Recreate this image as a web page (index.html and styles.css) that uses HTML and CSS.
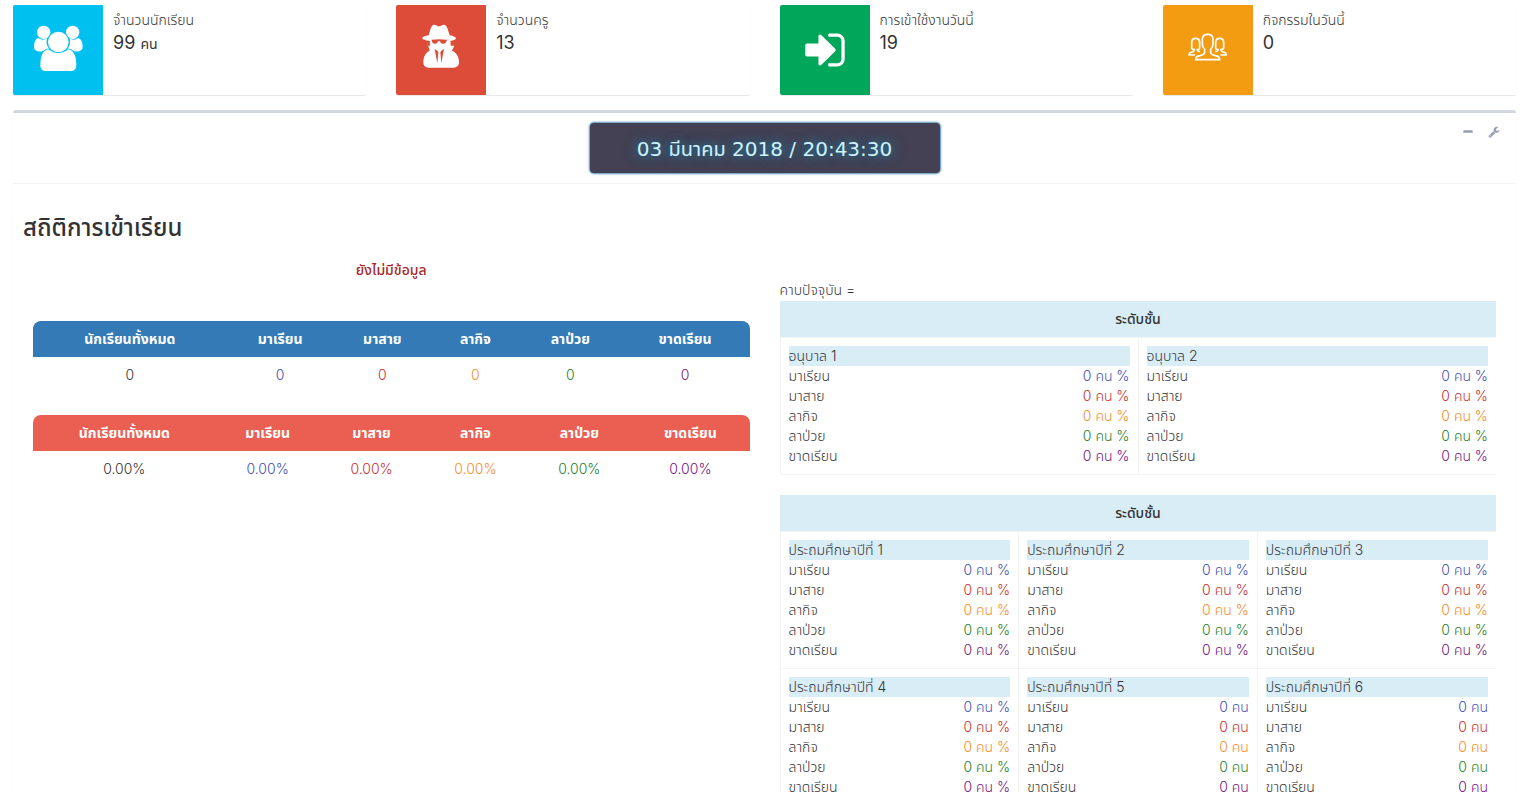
FILE: index.html
```html
<!DOCTYPE html>
<html lang="th">
<head>
<meta charset="utf-8">
<title>สถิติการเข้าเรียน</title>
<link rel="stylesheet" href="styles.css">
</head>
<body>
<main class="page">
  <section class="cards">
    <article class="card">
      <div class="card-icon aqua">
        <svg class="icon" viewBox="0 0 180 180" aria-hidden="true"><circle cx="47" cy="37" r="20"/><circle cx="134" cy="37" r="20"/><path d="M31 54Q44 64 57 55Q52 76 66 88Q50 88 44 94Q18 97 18 80Q18 58 31 54zM150 54Q138 64 125 55Q130 76 116 88Q131 88 138 94Q164 97 164 80Q164 58 150 54z"/><circle class="gap" cx="91" cy="66" r="31"/><path class="gap" d="M61 88Q74 99 91 99T121 88Q145 92 145 137Q144 153 128 153H54Q38 153 37 137Q37 92 61 88z"/></svg>
      </div>
      <div class="card-text"><span class="card-label">จำนวนนักเรียน</span><strong class="card-number">99 <small>คน</small></strong></div>
    </article>
    <article class="card">
      <div class="card-icon red">
        <svg class="icon" viewBox="0 0 180 180" aria-hidden="true"><path fill-rule="evenodd" d="M57 47C61 33 65 16 72 15C79 14 82 20 88 20S98 14 104 15C112 17 116 33 120 47C132 49 139 53 139 56C139 60 130 63 122 64C123 70 123 75 123 78H134L127 93C142 99 148 113 148 128C148 139 141 144 132 144H57C47 144 41 139 41 128C41 113 47 99 60 93L51 63L55 78H62Q59 70 61 64C48 62 38 60 38 56C38 52 45 49 57 47zM66 60V63C69 75 81 75 84 66Q85 64 88 64T92 66C95 75 108 75 111 63V60Q88 57 66 60zM75 88C79 90 83 92 86 98L83 131zM103 88C99 90 95 92 92 98L95 131z" transform="translate(-4 -1)"/></svg>
      </div>
      <div class="card-text"><span class="card-label">จำนวนครู</span><strong class="card-number">13</strong></div>
    </article>
    <article class="card">
      <div class="card-icon green">
        <svg class="icon-sign" viewBox="0 0 1792 1792" aria-hidden="true"><path d="M1312 896q0 26-19 45l-544 544q-19 19-45 19t-45-19-19-45v-288h-448q-26 0-45-19t-19-45v-384q0-26 19-45t45-19h448v-288q0-26 19-45t45-19 45 19l544 544q19 19 19 45zm352-352v704q0 119-84.5 203.5t-203.5 84.5h-320q-13 0-22.500-9.500t-9.500-22.500q0-4-1-20t-.5-26.500 3-23.500 10-19.500 20.500-6.500h320q66 0 113-47t47-113v-704q0-66-47-113t-113-47h-312l-11.500-1-11.500-3-8-5.500-7-9-2-13.500q0-4-1-20t-.5-26.500 3-23.500 10-19.500 20.500-6.500h320q119 0 203.500 84.500t84.500 203.500z"/></svg>
      </div>
      <div class="card-text"><span class="card-label">การเข้าใช้งานวันนี้</span><strong class="card-number">19</strong></div>
    </article>
    <article class="card">
      <div class="card-icon orange">
        <svg class="icon line" viewBox="0 0 180 180" aria-hidden="true"><path d="M53 119Q53 109 66 107Q80 104 80 97V88Q73 82 73 71V58Q73 43 89 43T105 58V71Q105 82 98 88V97Q98 104 112 107Q125 109 125 119zM51 105H33Q33 98 42 96Q49 94 49 89Q40 89 41 80V68Q41 55 53 55T65 68V80Q66 89 58 89Q58 93 66 95M127 105H145Q145 98 136 96Q129 94 129 89Q138 89 137 80V68Q137 55 125 55T113 68V80Q112 89 120 89Q120 93 112 95"/></svg>
      </div>
      <div class="card-text"><span class="card-label">กิจกรรมในวันนี้</span><strong class="card-number">0</strong></div>
    </article>
  </section>

  <section class="box">
    <header class="box-header">
      <time class="clock" datetime="2018-03-03T20:43:30">03 มีนาคม 2018 / 20:43:30</time>
      <div class="tools">
        <button type="button" aria-label="ย่อ"><svg viewBox="0 0 1792 1792"><path d="M1600 736v192q0 40-28 68t-68 28h-1216q-40 0-68-28t-28-68v-192q0-40 28-68t68-28h1216q40 0 68 28t28 68z"/></svg></button>
        <button type="button" aria-label="ตั้งค่า"><svg viewBox="0 0 1792 1792"><path d="M448 1472q0-26-19-45t-45-19-45 19-19 45 19 45 45 19 45-19 19-45zm644-420l-682 682q-37 37-90 37-52 0-91-37l-106-108q-38-36-38-90 0-53 38-91l681-681q39 98 114.500 173.500t173.500 114.500zm634-435q0 39-23 106-47 134-164.500 217.500t-258.500 83.500q-185 0-316.500-131.500t-131.500-316.500 131.500-316.500 316.500-131.500q58 0 121.500 16.500t107.500 46.500q16 11 16 28t-16 28l-293 169v224l193 107q5-3 79-48.500t135.500-81 70.500-35.500q15 0 23.500 10t8.500 25z"/></svg></button>
      </div>
    </header>
    <div class="box-body">
      <h1 class="title">สถิติการเข้าเรียน</h1>
      <div class="columns">
        <div class="summary">
          <p class="notice">ยังไม่มีข้อมูล</p>
          <table class="totals counts">
            <thead><tr><th>นักเรียนทั้งหมด</th><th>มาเรียน</th><th>มาสาย</th><th>ลากิจ</th><th>ลาป่วย</th><th>ขาดเรียน</th></tr></thead>
            <tbody><tr><td>0</td><td class="present">0</td><td class="late">0</td><td class="leave">0</td><td class="sick">0</td><td class="absent">0</td></tr></tbody>
          </table>
          <table class="totals percents">
            <thead><tr><th>นักเรียนทั้งหมด</th><th>มาเรียน</th><th>มาสาย</th><th>ลากิจ</th><th>ลาป่วย</th><th>ขาดเรียน</th></tr></thead>
            <tbody><tr><td>0.00%</td><td class="present">0.00%</td><td class="late">0.00%</td><td class="leave">0.00%</td><td class="sick">0.00%</td><td class="absent">0.00%</td></tr></tbody>
          </table>
        </div>
        <div class="levels">
          <p class="period">คาบปัจจุบัน =</p>
          <table class="level" data-columns="2" data-rooms="อนุบาล 1|อนุบาล 2" data-units="0 คน %|0 คน %"></table>
          <table class="level" data-columns="3" data-rooms="ประถมศึกษาปีที่ 1|ประถมศึกษาปีที่ 2|ประถมศึกษาปีที่ 3|ประถมศึกษาปีที่ 4|ประถมศึกษาปีที่ 5|ประถมศึกษาปีที่ 6" data-units="0 คน %|0 คน %|0 คน %|0 คน %|0 คน|0 คน"></table>
        </div>
      </div>
    </div>
  </section>
</main>
<script src="script.js"></script>
</body>
</html>
```
FILE: styles.css
```css
* { box-sizing: border-box; }
body {
  margin: 0;
  background: #fff;
  color: #333;
  font: 300 14px/20px Inter, "Noto Sans Thai", "Noto Sans", sans-serif;
}
.page {
  height: 100vh;
  overflow: hidden;
  padding: 5px 7px 0 13px;
}
.cards {
  display: grid;
  grid-template-columns: repeat(4, 1fr);
  gap: 30px;
  margin-bottom: 15px;
}
.card {
  display: flex;
  height: 90px;
  border-radius: 2px;
  box-shadow: 0 1px 1px rgba(0, 0, 0, 0.1);
}
.card-icon {
  display: flex;
  align-items: center;
  justify-content: center;
  width: 90px;
  border-radius: 2px 0 0 2px;
  fill: #fff;
}
.aqua { background: #00c0ef; }
.red { background: #dd4b39; }
.green { background: #00a65a; }
.orange { background: #f39c12; }
.icon { width: 60px; height: 60px; }
.icon-sign { width: 46px; height: 46px; }
.gap { stroke: #00c0ef; stroke-width: 5; paint-order: stroke; }
.line { fill: none; stroke: #fff; stroke-width: 5; }
.card-text { padding: 5px 10px; }
.card-label { display: block; line-height: 20px; }
.card-number { display: block; font-size: 18px; font-weight: 400; line-height: 25px; }
.card-number small { font-size: 14px; }

.box {
  border-top: 3px solid #d2d6de;
  border-radius: 3px;
  box-shadow: 0 1px 1px rgba(0, 0, 0, 0.1);
}
.box-header {
  display: grid;
  grid-template-columns: 1fr auto 1fr;
  align-items: start;
  padding: 10px;
  border-bottom: 1px solid #f4f4f4;
}
.clock {
  grid-column: 2;
  width: 350px;
  height: 50px;
  border-radius: 4px;
  background: #434153;
  box-shadow: 0 0 2px 1px #4a90b8;
  color: #cff3ff;
  font: 20px/52px "DejaVu Sans", "Noto Sans Thai", sans-serif;
  text-align: center;
  text-shadow: 0 0 10px rgba(10, 175, 230, 0.7), 0 0 20px rgba(10, 175, 230, 0.3);
}
.tools { display: flex; justify-content: flex-end; gap: 14px; padding: 3px 6px; }
.tools button { display: flex; padding: 0; border: 0; background: none; }
.tools svg { width: 12px; height: 12px; fill: #97a0b3; }

.box-body { padding: 10px; }
.title { margin: 21px 0 10px; font-size: 24px; font-weight: 500; line-height: 26px; }
.columns { display: grid; grid-template-columns: 1fr 1fr; gap: 30px; padding: 9px 10px 0; }
.notice { margin: 0 0 41px; color: #a22b28; font-weight: 500; text-align: center; }
.totals {
  width: 100%;
  margin-bottom: 22px;
  border-collapse: separate;
  border-spacing: 0;
  table-layout: fixed;
  text-align: center;
}
.totals th, .totals td { padding: 8px 0; }
.totals th { color: #fff; font-weight: 700; }
.totals th:first-child { border-top-left-radius: 8px; }
.totals th:last-child { border-top-right-radius: 8px; }
.counts th { background: #337ab7; width: 13.5%; }
.counts th:nth-child(1) { width: 27%; }
.counts th:nth-child(2) { width: 15%; }
.counts th:nth-child(4) { width: 12.5%; }
.counts th:nth-child(5) { width: 14%; }
.counts th:nth-child(6) { width: 18%; }
.percents th { background: #eb5f53; width: 14.5%; }
.percents th:nth-child(1) { width: 25.5%; }
.percents th:nth-child(6) { width: 16.5%; }

.present { color: #3f51b5; }
.late { color: #c9302c; }
.leave { color: #f58b27; }
.sick { color: #1f8028; }
.absent { color: #76127f; }

.period { margin: 20px 0 1px; }
.level {
  width: 100%;
  margin-bottom: 20px;
  border-collapse: collapse;
  table-layout: fixed;
}
.level th { padding: 8px; background: #d9edf7; font-weight: 500; }
.level td { padding: 8px; border: 1px solid #f4f4f4; vertical-align: top; }
.level td:last-child { border-right: 0; }
.room { margin: 0; background: #d9edf7; }
.stats { margin: 0; }
.stats div { display: flex; justify-content: space-between; }
.stats dd { margin: 0; }
```
FILE: script.js
```js
const statuses = [
  ["มาเรียน", "present"],
  ["มาสาย", "late"],
  ["ลากิจ", "leave"],
  ["ลาป่วย", "sick"],
  ["ขาดเรียน", "absent"],
];

document.querySelectorAll(".level").forEach((table) => {
  const rooms = table.dataset.rooms.split("|");
  const units = table.dataset.units.split("|");
  const columns = Number(table.dataset.columns);
  let html = `<thead><tr><th colspan="${columns}">ระดับชั้น</th></tr></thead><tbody>`;
  for (let i = 0; i < rooms.length; i += columns) {
    html += "<tr>";
    for (let j = i; j < i + columns; j++) {
      const rows = statuses
        .map(([label, name]) => `<div><dt>${label}</dt><dd class="${name}">${units[j]}</dd></div>`)
        .join("");
      html += `<td><p class="room">${rooms[j]}</p><dl class="stats">${rows}</dl></td>`;
    }
    html += "</tr>";
  }
  table.innerHTML = html + "</tbody>";
});
```
